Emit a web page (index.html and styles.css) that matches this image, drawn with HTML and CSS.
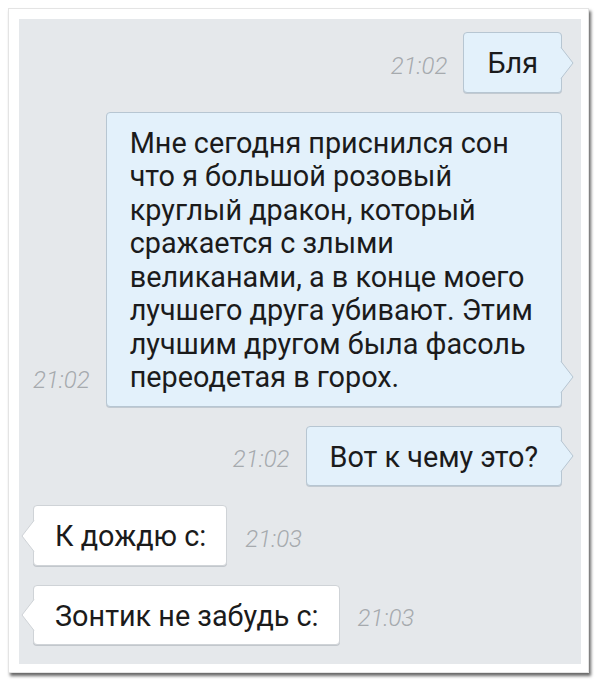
FILE: index.html
```html
<!DOCTYPE html>
<html lang="ru">
<head>
    <meta charset="UTF-8">
    <meta name="viewport" content="width=device-width, initial-scale=1.0">
    <title>Чат</title>
    <link rel="stylesheet" href="styles.css">
</head>
<body>
    <div class="frame">
        <div class="chat">
            <div class="row out">
                <span class="time">21:02</span>
                <div class="bubble">Бля
                    <svg class="tail" viewBox="0 0 13 32"><path d="M0,0.5 L12,16 L0,31.5"/></svg>
                </div>
            </div>

            <div class="row out">
                <span class="time">21:02</span>
                <div class="bubble wide">Мне сегодня приснился сон<br>что я большой розовый<br>круглый дракон, который<br>сражается с злыми<br>великанами, а в конце моего<br>лучшего друга убивают. Этим<br>лучшим другом была фасоль<br>переодетая в горох.
                    <svg class="tail" viewBox="0 0 13 32"><path d="M0,0.5 L12,16 L0,31.5"/></svg>
                </div>
            </div>

            <div class="row out">
                <span class="time">21:02</span>
                <div class="bubble">Вот к чему это?
                    <svg class="tail" viewBox="0 0 13 32"><path d="M0,0.5 L12,16 L0,31.5"/></svg>
                </div>
            </div>

            <div class="row in">
                <div class="bubble">К дождю с:
                    <svg class="tail" viewBox="0 0 13 32"><path d="M13,0.5 L1,16 L13,31.5"/></svg>
                </div>
                <span class="time">21:03</span>
            </div>

            <div class="row in">
                <div class="bubble">Зонтик не забудь с:
                    <svg class="tail" viewBox="0 0 13 32"><path d="M13,0.5 L1,16 L13,31.5"/></svg>
                </div>
                <span class="time">21:03</span>
            </div>
        </div>
    </div>
</body>
</html>
```

FILE: styles.css
```css
body {
    margin: 0;
    background: #fff;
    font-family: Roboto, "Noto Sans", Arial, sans-serif;
    color: #1b1b1b;
}

.frame {
    margin: 8px;
    width: 581px;
    height: 665px;
    box-sizing: border-box;
    padding: 10px 7px 8px 10px;
    background: #fff;
    border: 1px solid #e4e4e4;
    box-shadow: 2px 3px 3px rgba(0, 0, 0, 0.6);
}

.chat {
    height: 100%;
    box-sizing: border-box;
    background: #e5e8eb;
    padding: 13px 19px 0 14px;
    display: flex;
    flex-direction: column;
    gap: 19px;
}

.row {
    display: flex;
    align-items: flex-end;
    gap: 16px;
}

.row.out {
    justify-content: flex-end;
}

.row.in {
    gap: 18px;
}

.bubble {
    position: relative;
    box-sizing: border-box;
    padding: 14px 23px 11px;
    font-size: 28.8px;
    line-height: 33.5px;
    border-radius: 4px;
}

.out .bubble {
    background: #e3f1fb;
    border: 1px solid #b7c6d2;
    box-shadow: 0 1px 0 rgba(90, 110, 130, 0.25);
}

.in .bubble {
    padding-left: 21px;
    padding-right: 20px;
    background: #fff;
    border: 1px solid #cfd3d7;
    box-shadow: 0 1px 0 rgba(90, 100, 110, 0.25);
}

.bubble.wide {
    width: 458px;
}

.tail {
    position: absolute;
    bottom: 13px;
    width: 13px;
    height: 32px;
    overflow: visible;
}

.out .tail {
    right: -13px;
}

.out .tail path {
    fill: #e3f1fb;
    stroke: #b7c6d2;
    stroke-width: 1;
}

.in .tail {
    left: -13px;
}

.in .tail path {
    fill: #fff;
    stroke: #cfd3d7;
    stroke-width: 1;
}

.time {
    font-size: 24px;
    line-height: 24px;
    font-weight: 300;
    font-style: italic;
    color: #a6aaae;
    padding-bottom: 15px;
}
```
